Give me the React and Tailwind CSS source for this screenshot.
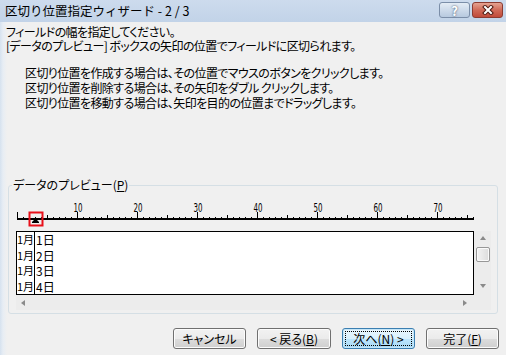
import React from 'react';

const ticks = Array.from({ length: 77 }, (_, c) => c);
const labels = [10, 20, 30, 40, 50, 60, 70];
const rows = ['1', '2', '3', '4'];

const Ruler = () => (
  <svg width="460" height="26" className="block overflow-visible">
    {/* base line */}
    <rect x="1" y="17" width="457" height="2" fill="#000" />
    {ticks.map((c) => {
      const h = c % 10 === 0 ? 6 : c % 5 === 0 ? 3 : 1;
      return <rect key={c} x={1 + 6 * c} y={17 - h} width="1" height={h} fill="#000" />;
    })}
    {labels.map((n) => (
      <text
        key={n}
        x={1 + (n / 10) * 60 + 1}
        y="10.5"
        fontSize="13"
        textAnchor="middle"
        textLength="9"
        lengthAdjust="spacingAndGlyphs"
        fontFamily="'DejaVu Sans Condensed', 'Liberation Sans', sans-serif"
        fill="#000"
      >
        {n}
      </text>
    ))}
    {/* column break marker */}
    <rect x="13.5" y="11.5" width="13" height="13" fill="none" stroke="#e8101a" strokeWidth="2" />
    <polygon points="19.5,17.5 16,21 23,21" fill="#000" />
    <rect x="16" y="21" width="7" height="1" fill="#000" />
  </svg>
);

const Arrow = ({ dir }) => {
  const pts = {
    up: '4,1 7,5 1,5',
    down: '1,1 7,1 4,5',
    left: '5,1 5,7 1,4',
    right: '1,1 1,7 5,4',
  }[dir];
  return (
    <svg width="8" height="8" className="block">
      <polygon points={pts} fill="#8a8a8a" />
    </svg>
  );
};

export default function App() {
  return (
    <div className="w-[506px] h-[355px] overflow-hidden flex flex-col bg-[linear-gradient(to_right,#d6e2ef_0px,#e7edf4_3px,#f0f0f0_7px)] font-['Noto_Sans_CJK_JP',sans-serif] text-black [font-feature-settings:'palt']">
      {/* title bar */}
      <div className="h-[22px] shrink-0 flex items-start justify-between bg-gradient-to-b from-[#cddbed] to-[#c2d3e8]">
        <div className="pl-[5px] text-[12.5px] leading-[22px] [font-feature-settings:normal] whitespace-pre">区切り位置指定ウィザード - 2 / 3</div>
        <div className="flex gap-[2px] pt-[2px] pr-[3px]">
          <div className="w-[31px] h-[16px] rounded-[3px] border border-[#7b8ea8] bg-gradient-to-b from-[#e4ecf5] to-[#b7c9df] flex items-center justify-center text-[13px] leading-none font-bold text-white [text-shadow:0_0_2px_#2e3d55]">
            ?
          </div>
          <div className="w-[31px] h-[16px] rounded-[3px] border border-[#8c3b31] bg-gradient-to-b from-[#e4a291] via-[#d06a58] to-[#c04a3a] flex items-center justify-center">
            <svg width="12" height="10">
              <path d="M3 2 L9 8 M9 2 L3 8" stroke="#4e1a12" strokeWidth="4" strokeLinecap="square" />
              <path d="M3 2 L9 8 M9 2 L3 8" stroke="#fff" strokeWidth="2" strokeLinecap="square" />
            </svg>
          </div>
        </div>
      </div>

      {/* instructions */}
      <div className="pt-[3px] pl-[6px] text-[12px] leading-[14px] tracking-[-0.6px]">
        <p>フィールドの幅を指定してください。</p>
        <p>[データのプレビュー] ボックスの矢印の位置でフィールドに区切られます。</p>
      </div>
      <div className="mt-[12px] pl-[25px] text-[12px] leading-[15px] tracking-[-0.6px]">
        <p>区切り位置を作成する場合は、その位置でマウスのボタンをクリックします。</p>
        <p>区切り位置を削除する場合は、その矢印をダブル クリックします。</p>
        <p>区切り位置を移動する場合は、矢印を目的の位置までドラッグします。</p>
      </div>

      {/* preview group */}
      <fieldset className="mt-[68px] ml-[8px] w-[490px] border border-[#d5dfe5] rounded-[3px] p-0 min-w-0">
        <legend className="ml-[3px] px-[1px] text-[12px] leading-[14px]">
          データのプレビュー(<span className="underline">P</span>)
        </legend>
        <div className="pl-[7px] pr-[6px] pb-[3px]">
          <div className="mt-[9px] h-[26px]">
            <Ruler />
          </div>
          <div className="mt-[4px] flex">
            <div className="w-[458px] flex flex-col">
              <div className="h-[64px] border border-black bg-white flex overflow-hidden text-[12px] leading-[15.5px] [font-feature-settings:normal]">
                <div className="w-[17px] shrink-0 overflow-hidden text-[11px] tracking-[-0.1px]">
                  {rows.map((r) => (
                    <div key={r} className="whitespace-nowrap">1月</div>
                  ))}
                </div>
                <div className="border-l border-black pl-[1px]">
                  {rows.map((r) => (
                    <div key={r} className="whitespace-nowrap">{r}日</div>
                  ))}
                </div>
              </div>
              <div className="h-[15px] bg-[#ececec] flex items-center justify-between px-[4px]">
                <Arrow dir="left" />
                <Arrow dir="right" />
              </div>
            </div>
            <div className="w-[17px] flex flex-col">
              <div className="h-[64px] bg-[#ececec] flex flex-col items-center">
                <div className="h-[16px] flex items-center justify-center">
                  <Arrow dir="up" />
                </div>
                <div className="w-[14px] h-[15px] rounded-[2px] border border-[#979797] bg-gradient-to-r from-[#f4f4f4] to-[#dcdcdc] shadow-[inset_0_0_0_1px_#fafafa]" />
                <div className="flex-1" />
                <div className="h-[16px] flex items-center justify-center">
                  <Arrow dir="down" />
                </div>
              </div>
              <div className="h-[15px] bg-[#ececec]" />
            </div>
          </div>
        </div>
      </fieldset>

      {/* buttons */}
      <div className="mt-[14px] flex justify-end gap-[11px] pr-[7px] text-[12px]">
        <button className="w-[73px] h-[21px] rounded-[3px] border border-[#707070] bg-[linear-gradient(to_bottom,#f2f2f2_0%,#ebebeb_50%,#dddddd_50%,#cfcfcf_100%)] shadow-[inset_0_0_0_1px_#fcfcfc] leading-none">
          キャンセル
        </button>
        <button className="w-[74px] h-[21px] rounded-[3px] border border-[#707070] bg-[linear-gradient(to_bottom,#f2f2f2_0%,#ebebeb_50%,#dddddd_50%,#cfcfcf_100%)] shadow-[inset_0_0_0_1px_#fcfcfc] leading-none">
          &lt; 戻る(<span className="underline">B</span>)
        </button>
        <button className="w-[73px] h-[21px] rounded-[3px] border border-[#3c7fb1] bg-[linear-gradient(to_bottom,#eaf6fd_0%,#d9f0fc_50%,#bee6fd_50%,#a7d9f5_100%)] shadow-[inset_0_0_0_1px_#c5e6f8] p-[2px] leading-none">
          <div className="w-full h-full border border-dotted border-black flex items-center justify-center">
            次へ(<span className="underline">N</span>) &gt;
          </div>
        </button>
        <button className="w-[73px] h-[21px] rounded-[3px] border border-[#707070] bg-[linear-gradient(to_bottom,#f2f2f2_0%,#ebebeb_50%,#dddddd_50%,#cfcfcf_100%)] shadow-[inset_0_0_0_1px_#fcfcfc] leading-none">
          完了(<span className="underline">F</span>)
        </button>
      </div>
    </div>
  );
}
